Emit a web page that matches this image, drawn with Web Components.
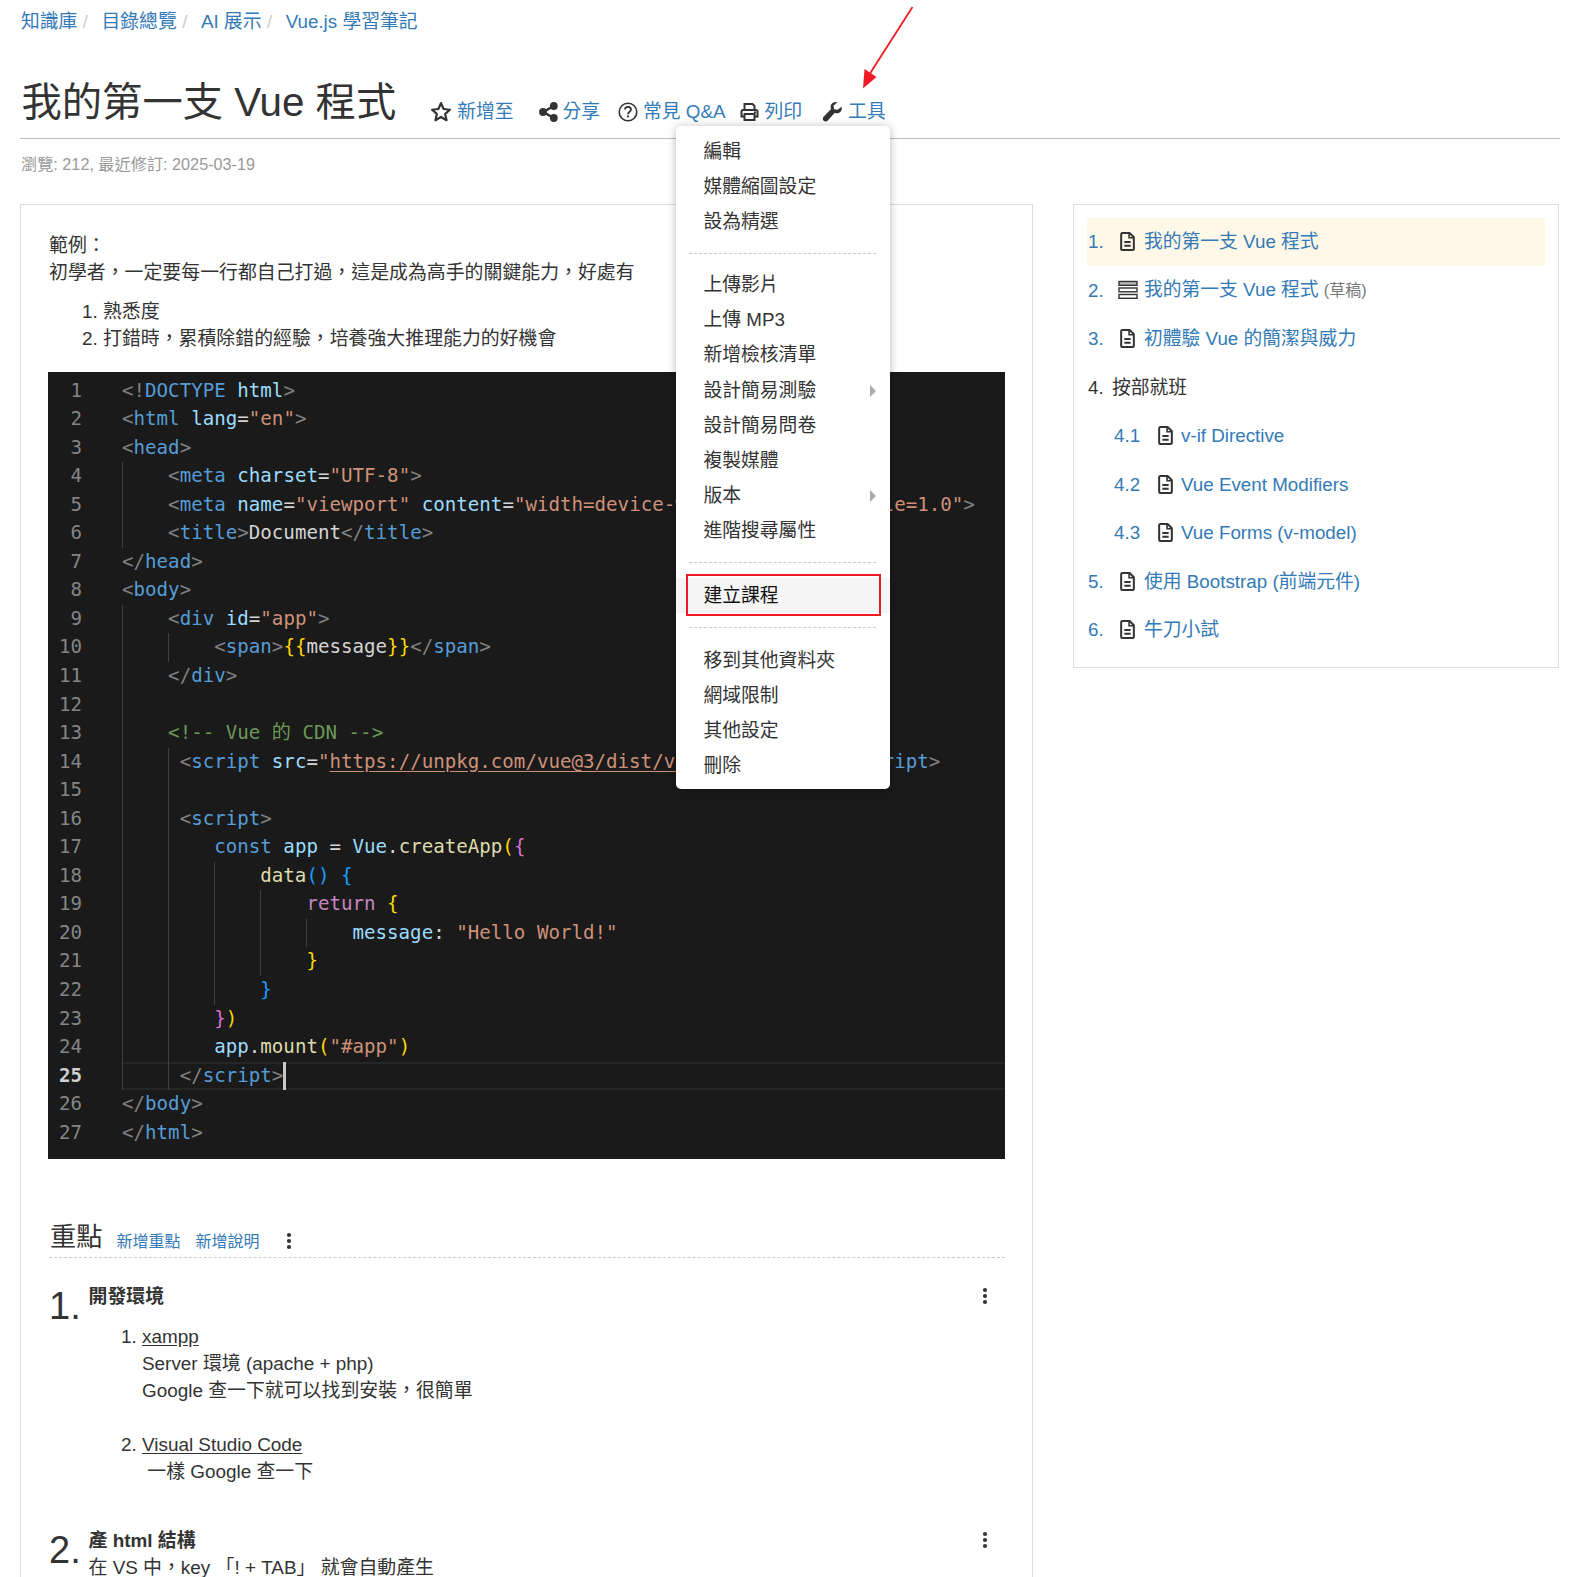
<!DOCTYPE html>
<html lang="zh-Hant">
<head>
<meta charset="utf-8">
<title>我的第一支 Vue 程式</title>
<style>
  html, body { margin: 0; height: 1577px; overflow: hidden; background: #fff; }
  body { font: 18.800px/27px "Liberation Sans", "Noto Sans CJK TC", sans-serif; color: #333; }
</style>
</head>
<body>
<kb-page></kb-page>

<script>
const ICONS = {
  star: '<svg width="22" height="21" viewBox="0 0 21 20"><path d="M10.500 2 13 7.600l6 .7-4.500 4 1.300 6-5.300-3.100-5.300 3.100 1.300-6-4.500-4 6-.7z" fill="none" stroke="#333" stroke-width="2.100" stroke-linejoin="round"/></svg>',
  share: '<svg width="19" height="20" viewBox="0 0 19 20"><path d="M14.500 4 4.500 10l10 6" fill="none" stroke="#333" stroke-width="2.600"/><circle cx="14.800" cy="4" r="3.900" fill="#333"/><circle cx="4" cy="10" r="3.900" fill="#333"/><circle cx="14.800" cy="16" r="3.900" fill="#333"/></svg>',
  help: '<svg width="20" height="20" viewBox="0 0 20 20"><circle cx="10" cy="10" r="8.800" fill="none" stroke="#333" stroke-width="1.600"/><path d="M7 7.600C7 5.700 8.400 4.900 10 4.900c1.700 0 3 1 3 2.600 0 2.300-3 2.300-3 4.700" fill="none" stroke="#333" stroke-width="1.800"/><rect x="9" y="13.400" width="2" height="2" fill="#333"/></svg>',
  print: '<svg width="19" height="20" viewBox="0 0 19 20"><path d="M4.500 8V2h8l2 2v4M4.500 14.500H1.500V9.500a1.500 1.500 0 0 1 1.500-1.500h13a1.500 1.500 0 0 1 1.500 1.500v5h-3" fill="none" stroke="#333" stroke-width="2"/><rect x="4.500" y="12" width="10" height="6" fill="none" stroke="#333" stroke-width="2"/><rect x="14" y="9.500" width="2" height="1.500" fill="#333"/></svg>',
  wrench: '<svg width="20" height="20" viewBox="0 0 20 20"><path d="M19.600 4.800c.6 2.600-.3 4.900-2.400 6-1.500.8-3.100.7-4.400 0L5.600 18.700c-1.100 1.100-2.900 1.100-4 0s-1.100-2.900 0-4l7.500-7.700C8.500 5.600 8.400 3.900 9.200 2.500 10.300.5 12.700-.4 15.200.3l-3.700 3.500.6 3.400 3.400.6z" fill="#333"/></svg>',
  file: '<svg width="15" height="19" viewBox="0 0 14 18"><path d="M1 2a1 1 0 0 1 1-1h7l4 4v11a1 1 0 0 1-1 1H2a1 1 0 0 1-1-1z" fill="none" stroke="#333" stroke-width="1.900"/><path d="M8.500 1.500V5.500H13" fill="none" stroke="#333" stroke-width="1.500"/><path d="M4 9.500h6M4 13h6" stroke="#333" stroke-width="1.900"/></svg>',
  draft: '<svg width="20" height="20" viewBox="0 0 20 20"><g stroke="#333" stroke-width="1.400"><rect x="1" y="1.500" width="18" height="3.800" fill="#bbb"/><rect x="1" y="8" width="18" height="3.800" fill="#fff"/><rect x="1" y="14.500" width="18" height="3.800" fill="#fff"/></g></svg>',
  dots: '<svg width="6" height="18" viewBox="0 0 6 18"><circle cx="3" cy="3" r="2.100" fill="#333"/><circle cx="3" cy="9" r="2.100" fill="#333"/><circle cx="3" cy="15" r="2.100" fill="#333"/></svg>'
};

class KbIcon extends HTMLElement {
  connectedCallback() {
    this.attachShadow({ mode: 'open' });
    this.shadowRoot.innerHTML = `<style>:host{display:inline-flex;align-items:center;justify-content:center;line-height:0}</style>${ICONS[this.getAttribute('name')]}`;
  }
}

class KbPage extends HTMLElement {
  connectedCallback() {
    this.attachShadow({ mode: 'open' });
    this.shadowRoot.innerHTML = `
      <style>
        :host { display: block; position: relative; padding: 0 16px 0 20px; }
        .columns { display: grid; grid-template-columns: 1013px 486px; gap: 40px; margin-top: 27.500px; align-items: start; }
        .main { border: 1px solid #ddd; padding: 27.500px 27px 0 28px; height: 1400px; font-size: 18.900px; }
        p { margin: 0; }
        ol.intro { margin: 12px 0 0; padding-left: 54px; }
      </style>
      <kb-breadcrumb></kb-breadcrumb>
      <kb-header></kb-header>
      <div class="columns">
        <div class="main">
          <p>範例：<br>初學者，一定要每一行都自己打過，這是成為高手的關鍵能力，好處有</p>
          <ol class="intro"><li>熟悉度</li><li>打錯時，累積除錯的經驗，培養強大推理能力的好機會</li></ol>
          <kb-code></kb-code>
          <kb-points></kb-points>
        </div>
        <kb-toc></kb-toc>
      </div>
      <kb-menu></kb-menu>
    `;
  }
}

class KbBreadcrumb extends HTMLElement {
  connectedCallback() {
    this.attachShadow({ mode: 'open' });
    const items = ['知識庫', '目錄總覽', 'AI 展示', 'Vue.js 學習筆記'];
    this.shadowRoot.innerHTML = `
      <style>
        :host { display: block; padding: 8px 0 0 1px; }
        nav { display: flex; }
        a { color: #337ab7; }
        i { font-style: normal; color: #ccc; margin: 0 13.500px 0 5.500px; }
      </style>
      <nav>${items.map((t, n) => `<a>${t}</a>${n < items.length - 1 ? '<i>/</i>' : ''}`).join('')}</nav>
    `;
  }
}

class KbHeader extends HTMLElement {
  connectedCallback() {
    this.attachShadow({ mode: 'open' });
    this.shadowRoot.innerHTML = `
      <style>
        :host { display: block; }
        .bar { display: flex; align-items: flex-end; margin-top: 41px; padding: 0 0 8px 1.500px; border-bottom: 1px solid #bbb; }
        h1 { margin: 0 34px 0 0; font-size: 40.300px; line-height: 54px; font-weight: 400; color: #333; }
        .act { display: inline-flex; align-items: center; gap: 5px; margin-bottom: 5px; color: #337ab7; white-space: nowrap; }
        .meta { margin-top: 13px; font-size: 16.200px; line-height: 24px; color: #999; padding-left: 1px; }
        svg.arrow { position: absolute; left: 855px; top: 0; }
      </style>
      <div class="bar">
        <h1>我的第一支 Vue 程式</h1>
        <span class="act"><kb-icon name="star"></kb-icon>新增至</span>
        <span class="act" style="margin-left:25px"><kb-icon name="share"></kb-icon>分享</span>
        <span class="act" style="margin-left:18px"><kb-icon name="help"></kb-icon>常見 Q&amp;A</span>
        <span class="act" style="margin-left:14px;gap:6px"><kb-icon name="print"></kb-icon>列印</span>
        <span class="act" style="margin-left:20px;gap:6px"><kb-icon name="wrench"></kb-icon>工具</span>
      </div>
      <div class="meta">瀏覽: 212, 最近修訂: 2025-03-19</div>
      <svg class="arrow" width="70" height="95" viewBox="0 0 70 95">
        <path d="M57.500 7 14 75" stroke="#ed1c24" stroke-width="1.800" fill="none"/>
        <path d="M8 88.500 9.500 69 21.500 77z" fill="#ed1c24"/>
      </svg>
    `;
  }
}

class KbMenu extends HTMLElement {
  connectedCallback() {
    this.attachShadow({ mode: 'open' });
    const groups = [
      [['編輯'], ['媒體縮圖設定'], ['設為精選']],
      [['上傳影片'], ['上傳 MP3'], ['新增檢核清單'], ['設計簡易測驗', 'sub'], ['設計簡易問卷'], ['複製媒體'], ['版本', 'sub'], ['進階搜尋屬性']],
      [['建立課程', 'mark']],
      [['移到其他資料夾'], ['網域限制'], ['其他設定'], ['刪除']]
    ];
    const row = ([t, kind]) => `<div class="item ${kind || ''}">${t}</div>`;
    this.shadowRoot.innerHTML = `
      <style>
        :host { position: absolute; left: 676px; top: 126px; width: 214px; box-sizing: border-box; padding: 7.500px 0 6px;
          background: #fff; border-radius: 5px; box-shadow: 0 1px 10px rgba(0,0,0,.28); color: #333; }
        .item { position: relative; height: 35.100px; line-height: 35.100px; padding-left: 27.500px; white-space: nowrap; }
        .sub::after { content: ""; position: absolute; right: 14px; top: 12px; border-left: 6px solid #aaa; border-top: 6px solid transparent; border-bottom: 6px solid transparent; }
        .mark { background: #f5f5f5; color: #111; }
        .mark::after { content: ""; position: absolute; left: 10px; right: 9px; top: -3.500px; bottom: -3px; border: 2px solid #ed1c24; }
        hr { margin: 14px 14px 14.500px 13px; border: 0; border-top: 1px dashed #ccc; }
        hr.a { margin-bottom: 13.500px; }
        hr.c { margin-top: 14.500px; margin-bottom: 14.500px; }
      </style>
      ${groups.map(g => g.map(row).join('')).reduce((all, g, n) => all + `<hr class="${'abc'[n - 1]}">` + g)}
    `;
  }
}

class KbCode extends HTMLElement {
  connectedCallback() {
    this.attachShadow({ mode: 'open' });
    const b = s => `<b>${s}</b>`;
    const tag = (name, attrs = '') => `${b('&lt;')}<u>${name}</u>${attrs}${b('&gt;')}`;
    const end = name => `${b('&lt;/')}<u>${name}</u>${b('&gt;')}`;
    const attr = (k, v) => ` <em>${k}</em>=<s>"${v}"</s>`;
    const sp = n => ' '.repeat(n);
    const y = s => `<span class="y">${s}</span>`;
    const p = s => `<span class="p">${s}</span>`;
    const c = s => `<span class="c">${s}</span>`;
    const lines = [
      [`${b('&lt;!')}<u>DOCTYPE</u> <em>html</em>${b('&gt;')}`],
      [tag('html', attr('lang', 'en'))],
      [tag('head')],
      [sp(4) + tag('meta', attr('charset', 'UTF-8')), [0]],
      [sp(4) + tag('meta', attr('name', 'viewport') + attr('content', 'width=device-width, initial-scale=1.0')), [0]],
      [sp(4) + tag('title') + '<span class="t">Document</span>' + end('title'), [0]],
      [end('head')],
      [tag('body')],
      [sp(4) + tag('div', attr('id', 'app')), [0]],
      [sp(8) + tag('span') + y('{{') + '<span class="t">message</span>' + y('}}') + end('span'), [0, 4]],
      [sp(4) + end('div'), [0]],
      ['', [0]],
      [sp(4) + '<span class="g">&lt;!-- Vue 的 CDN --&gt;</span>', [0]],
      [sp(5) + b('&lt;') + '<u>script</u> <em>src</em>=<s>"<a>https://unpkg.com/vue@3/dist/vue.global.js</a>"</s>' + b('&gt;') + end('script'), [0, 4]],
      ['', [0, 4]],
      [sp(5) + tag('script'), [0, 4]],
      [sp(8) + '<u>const</u> <em>app</em> <span class="t">=</span> <em>Vue</em>.<span class="f">createApp</span>' + y('(') + p('{'), [0, 4]],
      [sp(12) + '<span class="f">data</span>' + c('()') + ' ' + c('{'), [0, 4, 8]],
      [sp(16) + '<span class="r">return</span> ' + y('{'), [0, 4, 8, 12]],
      [sp(20) + '<em>message</em>: <s>"Hello World!"</s>', [0, 4, 8, 12, 16]],
      [sp(16) + y('}'), [0, 4, 8, 12]],
      [sp(12) + c('}'), [0, 4, 8]],
      [sp(8) + p('}') + y(')'), [0, 4]],
      [sp(8) + '<em>app</em>.<span class="f">mount</span>' + y('(') + '<s>"#app"</s>' + y(')'), [0, 4]],
      [sp(5) + end('script') + '<span class="cur"></span>', [0, 4], 'on'],
      [end('body')],
      [end('html')]
    ];
    this.shadowRoot.innerHTML = `
      <style>
        :host { display: block; margin: 19.500px 0 0 -1px; width: 957px; height: 787px; box-sizing: border-box; padding: 5px 0 0;
          background: #1a1a1a; font: 19.150px/28.550px "DejaVu Sans Mono", "Noto Sans CJK TC", monospace; color: #d4d4d4; overflow: hidden; }
        .line { display: flex; height: 28.550px; }
        .no { flex: none; width: 34px; margin-right: 40px; text-align: right; color: #858585; }
        .on .no { color: #d0d0d0; font-weight: 700; }
        pre { position: relative; flex: 1; margin: 0; font: inherit; white-space: pre; box-sizing: border-box; }
        .on pre { box-shadow: inset 0 2px 0 #262626, inset 0 -2px 0 #262626; }
        .bar { position: absolute; top: 0; bottom: 0; width: 1px; background: #404040; }
        b { font-weight: 400; color: #808080; }
        u { text-decoration: none; color: #569cd6; }
        em { font-style: normal; color: #9cdcfe; }
        s { text-decoration: none; color: #ce9178; }
        a { text-decoration: underline; text-underline-offset: 3px; }
        .t { color: #d4d4d4; }
        .f { color: #dcdcaa; }
        .r { color: #c586c0; }
        .g { color: #6a9955; }
        .y { color: #ffd700; }
        .p { color: #da70d6; }
        .c { color: #179fff; }
        .cur { display: inline-block; width: 3px; height: 28px; background: #c8c8c8; vertical-align: top; }
      </style>
      ${lines.map(([html, guides = [], cls = ''], n) => `<div class="line ${cls}"><span class="no">${n + 1}</span><pre>${guides.map(g => `<span class="bar" style="left:${g * 11.53}px"></span>`).join('')}${html}</pre></div>`).join('')}
    `;
  }
}

class KbPoints extends HTMLElement {
  connectedCallback() {
    this.attachShadow({ mode: 'open' });
    this.shadowRoot.innerHTML = `
      <style>
        :host { display: block; margin: 59px 0 0 0; }
        .head { display: flex; align-items: center; height: 39px; padding-left: 1px; border-bottom: 1px dashed #ccc; }
        h2 { margin: 0 14px 0 0; font-size: 26.200px; font-weight: 400; line-height: 39px; }
        a.add { font-size: 16px; color: #337ab7; margin-right: 15px; position: relative; top: 4px; }
        .head kb-icon { margin-left: 12px; position: relative; top: 4px; }
        .point { display: grid; grid-template-columns: 39.500px 1fr; margin-top: 42px; }
        .point.first { margin-top: 25px; }
        .num { font-size: 38px; line-height: 38px; padding: 4px 0 0 0; }
        .title { display: flex; justify-content: space-between; padding-right: 17px; font-weight: 700; align-items: center; }
        ol { margin: 13px 0 0; padding-left: 53.500px; }
        li u { text-underline-offset: 2px; }
        .gap { height: 27px; }
      </style>
      <div class="head">
        <h2>重點</h2>
        <a class="add">新增重點</a><a class="add">新增說明</a>
        <kb-icon name="dots"></kb-icon>
      </div>
      <div class="point first">
        <div class="num">1.</div>
        <div>
          <div class="title">開發環境<kb-icon name="dots"></kb-icon></div>
          <ol>
            <li><u>xampp</u><br>Server 環境 (apache + php)<br>Google 查一下就可以找到安裝，很簡單<div class="gap"></div></li>
            <li><u>Visual Studio Code</u><br>&nbsp;一樣 Google 查一下</li>
          </ol>
        </div>
      </div>
      <div class="point">
        <div class="num">2.</div>
        <div>
          <div class="title">產 html 結構<kb-icon name="dots"></kb-icon></div>
          <div>在 VS 中，key 「! + TAB」 就會自動產生</div>
        </div>
      </div>
    `;
  }
}

class KbToc extends HTMLElement {
  connectedCallback() {
    this.attachShadow({ mode: 'open' });
    const rows = [
      { no: '1.', icon: 'file', text: '我的第一支 Vue 程式', on: true },
      { no: '2.', icon: 'draft', text: '我的第一支 Vue 程式 <small>(草稿)</small>' },
      { no: '3.', icon: 'file', text: '初體驗 Vue 的簡潔與威力' },
      { no: '4.', text: '按部就班' },
      { no: '4.1', icon: 'file', text: 'v-if Directive', sub: true },
      { no: '4.2', icon: 'file', text: 'Vue Event Modifiers', sub: true },
      { no: '4.3', icon: 'file', text: 'Vue Forms (v-model)', sub: true },
      { no: '5.', icon: 'file', text: '使用 Bootstrap (前端元件)' },
      { no: '6.', icon: 'file', text: '牛刀小試' }
    ];
    this.shadowRoot.innerHTML = `
      <style>
        :host { display: block; box-sizing: border-box; border: 1px solid #ddd; padding: 13px 13px 13px 13px; color: #337ab7; }
        .row { display: flex; align-items: center; height: 48.500px; padding-left: 1px; }
        .row.on { background: #fff8e8; }
        .row.sub { padding-left: 27px; }
        .no { flex: none; width: 32px; }
        .sub .no { width: 44px; }
        .row.plain { color: #333; }
        .row.plain .no { width: 24px; }
        kb-icon { flex: none; width: 24px; justify-content: flex-start; }
        .sub kb-icon { width: 23px; }
        kb-icon[name="draft"] { margin-left: -2px; width: 26px; }
        small { font-size: 16px; color: #777; }
      </style>
      ${rows.map(r => `<div class="row ${r.on ? 'on' : ''} ${r.sub ? 'sub' : ''} ${r.icon ? '' : 'plain'}"><span class="no">${r.no}</span>${r.icon ? `<kb-icon name="${r.icon}"></kb-icon>` : ''}<span>${r.text}</span></div>`).join('')}
    `;
  }
}

customElements.define('kb-icon', KbIcon);
customElements.define('kb-breadcrumb', KbBreadcrumb);
customElements.define('kb-header', KbHeader);
customElements.define('kb-menu', KbMenu);
customElements.define('kb-code', KbCode);
customElements.define('kb-points', KbPoints);
customElements.define('kb-toc', KbToc);
customElements.define('kb-page', KbPage);
</script>
</body>
</html>
